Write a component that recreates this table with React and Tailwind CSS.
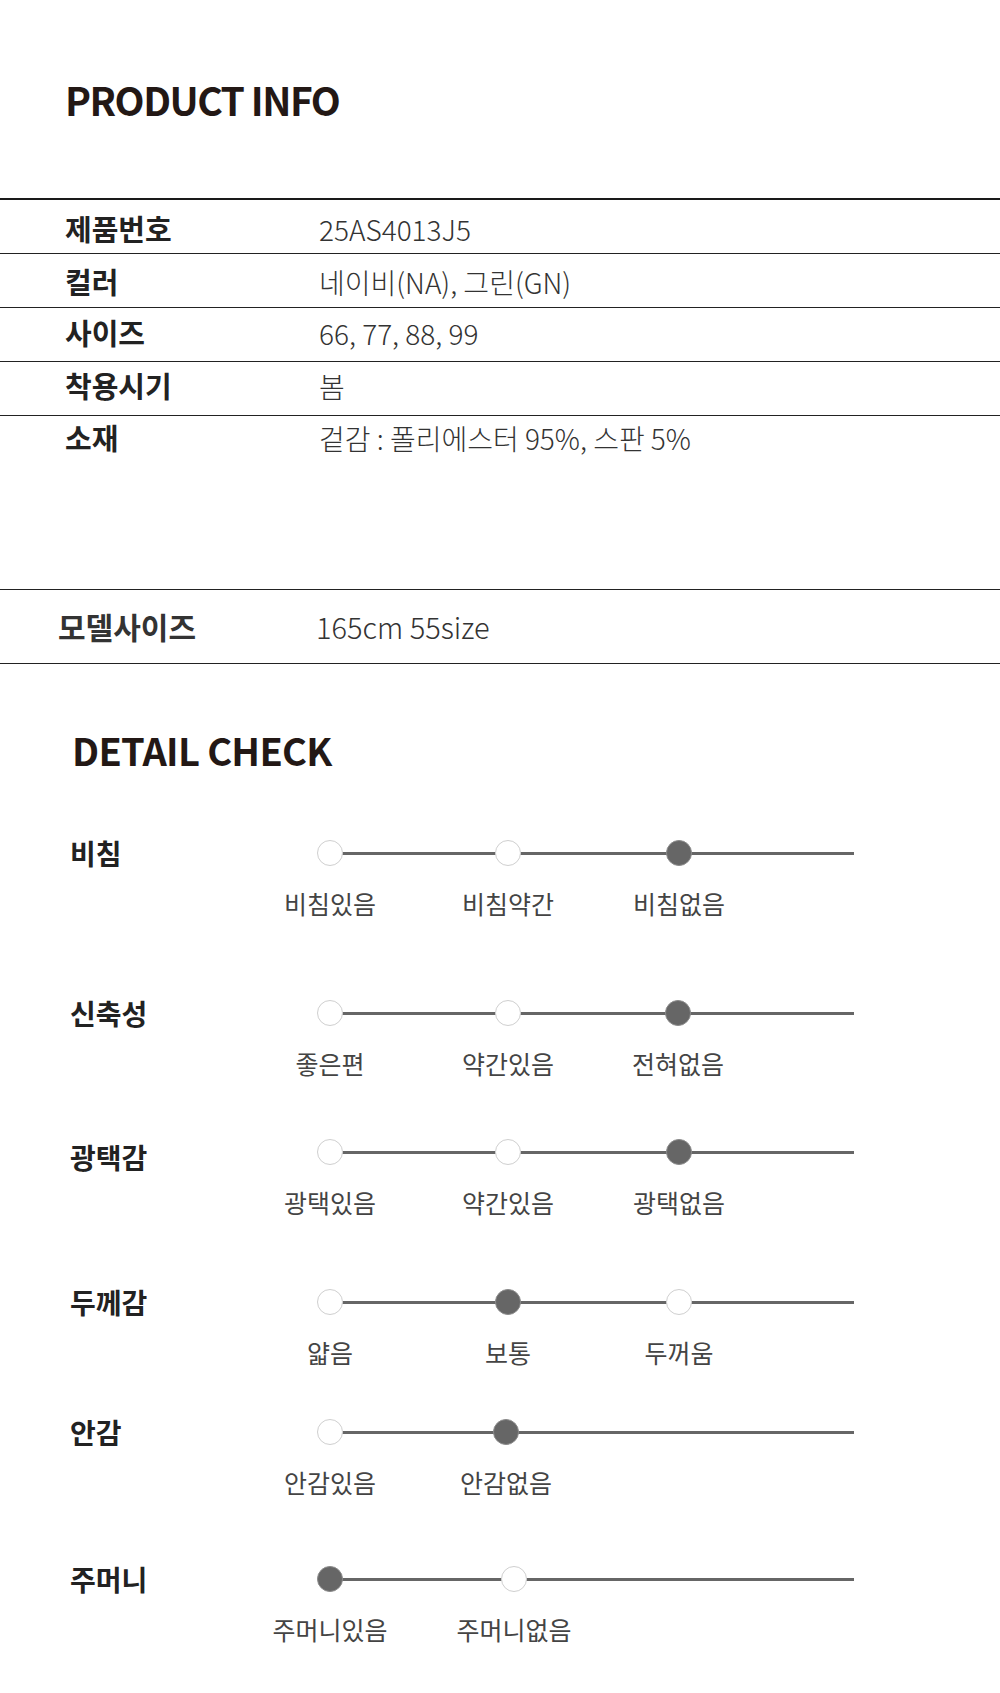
import React from 'react';

const info = [
  { label: '제품번호', value: '25AS4013J5', pad: 'pt-[4px]' },
  { label: '컬러', value: '네이비(NA), 그린(GN)', pad: 'pt-[2px]' },
  { label: '사이즈', value: '66, 77, 88, 99', pad: 'pb-[3px]' },
  { label: '착용시기', value: '봄', pad: 'pb-[5px]' },
];

// xs = circle centers in page pixels
const checks = [
  { title: '비침', mt: 'mt-[71px]', xs: [330, 508, 679], labels: ['비침있음', '비침약간', '비침없음'], active: 2 },
  { title: '신축성', mt: 'mt-[85px]', xs: [330, 508, 678], labels: ['좋은편', '약간있음', '전혀없음'], active: 2 },
  { title: '광택감', mt: 'mt-[64px]', xs: [330, 508, 679], labels: ['광택있음', '약간있음', '광택없음'], active: 2, shift: 'translate-y-[5px]' },
  { title: '두께감', mt: 'mt-[75px]', xs: [330, 508, 679], labels: ['얇음', '보통', '두꺼움'], active: 1 },
  { title: '안감', mt: 'mt-[55px]', xs: [330, 506], labels: ['안감있음', '안감없음'], active: 1 },
  { title: '주머니', mt: 'mt-[72px]', xs: [330, 514], labels: ['주머니있음', '주머니없음'], active: 0 },
];

const TRACK_LEFT = 317;

const Scale = ({ xs, labels, active }) => (
  <div className="w-[537px]">
    <div className="relative h-[26px]">
      <div className="absolute left-[13px] right-0 top-[11.5px] h-[3px] bg-[#666]" />
      {xs.map((x, i) => (
        <span
          key={i}
          className={
            i === active
              ? 'absolute top-0 w-[26px] h-[26px] rounded-full bg-[#666] border border-[#8a8a8a]'
              : 'absolute top-0 w-[26px] h-[26px] rounded-full bg-white border border-[#cfcfcf]'
          }
          style={{ left: x - TRACK_LEFT - 13 }}
        />
      ))}
    </div>
    <div className="relative h-[24px] mt-[25px]">
      {labels.map((t, i) => (
        <span
          key={i}
          className="absolute top-0 -translate-x-1/2 whitespace-nowrap text-[25px] leading-[24px] text-[#444]"
          style={{ left: xs[i] - TRACK_LEFT }}
        >
          {t}
        </span>
      ))}
    </div>
  </div>
);

const App = () => {
  return (
    <div className="w-[1000px] min-h-[1693px] bg-white font-['Noto_Sans_CJK_KR','Noto_Sans',sans-serif] pb-[51px]">
      <h1 className="pt-[80px] pl-[65px] text-[39px] tracking-[-1.5px] font-bold leading-none text-[#231815]">
        PRODUCT INFO
      </h1>

      <div className="mt-[79px] border-t-2 border-[#1a1a1a]">
        {info.map((row) => (
          <div key={row.label} className={`h-[54px] flex items-center ${row.pad} border-b border-[#222]`}>
            <div className="w-[319px] pl-[65px] text-[29px] font-bold text-[#222]">{row.label}</div>
            <div className="text-[28px] font-light text-[#333]">{row.value}</div>
          </div>
        ))}
        <div className="h-[174px] border-b border-[#222]">
          <div className="h-[53px] flex items-center pb-[9px]">
            <div className="w-[319px] pl-[65px] text-[29px] font-bold text-[#222]">소재</div>
            <div className="text-[28px] font-light text-[#333]">겉감 : 폴리에스터 95%, 스판 5%</div>
          </div>
        </div>
        <div className="h-[74px] flex items-center border-b border-[#222]">
          <div className="w-[316px] pl-[58px] text-[30px] font-bold text-[#333]">모델사이즈</div>
          <div className="text-[29px] font-light text-[#333]">165cm 55size</div>
        </div>
      </div>

      <h2 className="mt-[67px] pl-[72px] text-[38px] tracking-[-0.7px] font-bold leading-none text-[#231815]">
        DETAIL CHECK
      </h2>

      {checks.map((c) => (
        <div key={c.title} className={`${c.mt} flex items-start pl-[70px]`}>
          <div className={`w-[247px] h-[26px] flex items-center text-[28px] font-bold leading-none text-[#222] ${c.shift || ''}`}>
            {c.title}
          </div>
          <Scale xs={c.xs} labels={c.labels} active={c.active} />
        </div>
      ))}
    </div>
  );
};

export default App;
